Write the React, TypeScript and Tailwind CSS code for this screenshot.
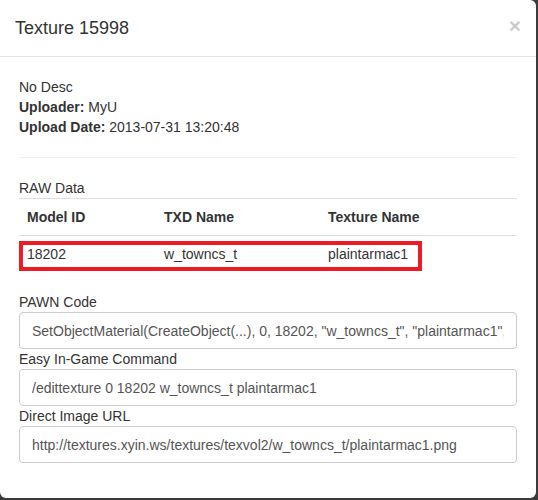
import React from "react";

const rows = [{ model: "18202", txd: "w_towncs_t", tex: "plaintarmac1" }];

const fields = [
  { label: "PAWN Code", value: 'SetObjectMaterial(CreateObject(...), 0, 18202, "w_towncs_t", "plaintarmac1", 0xFFFFFFFF);' },
  { label: "Easy In-Game Command", value: "/edittexture 0 18202 w_towncs_t plaintarmac1" },
  { label: "Direct Image URL", value: "http://textures.xyin.ws/textures/texvol2/w_towncs_t/plaintarmac1.png" },
];

export default function App() {
  return (
    <div className="h-[500px] w-[538px] overflow-hidden bg-[#3b3b3b] font-['Liberation_Sans',Arial,sans-serif] text-[14px] leading-[20px] text-[#333]">
      <div className="h-[498px] w-[536px] rounded-tr-md rounded-b-md bg-white">
        <div className="flex items-start justify-between border-b border-[#e5e5e5] px-[15px] pb-[15px] pt-[15px]">
          <h4 className="text-[18px] leading-[26px]">Texture 15998</h4>
          <button className="mt-[-2px] text-[21px] font-bold leading-[26px] text-black opacity-20">×</button>
        </div>

        <div className="pl-[19px] pr-[19px] pt-5">
          <div>
            <p>No Desc</p>
            <p><b>Uploader:</b> MyU</p>
            <p><b>Upload Date:</b> 2013-07-31 13:20:48</p>
          </div>
          <hr className="my-5 border-t border-[#eee]" />

          <p>RAW Data</p>
          <div className="relative mb-5">
            <table className="w-full border-collapse text-left">
              <thead>
                <tr className="border-y border-[#ddd]">
                  <th className="w-[137px] p-2 font-bold">Model ID</th>
                  <th className="w-[164px] p-2 font-bold">TXD Name</th>
                  <th className="p-2 font-bold">Texture Name</th>
                </tr>
              </thead>
              <tbody>
                {rows.map((r) => (
                  <tr key={r.model}>
                    <td className="p-2">{r.model}</td>
                    <td className="p-2">{r.txd}</td>
                    <td className="p-2">{r.tex}</td>
                  </tr>
                ))}
              </tbody>
            </table>
            {/* highlight drawn over the row */}
            <div className="pointer-events-none absolute left-0 top-[43px] h-[30px] w-[403px] border-4 border-[#ed1c24]" />
          </div>

          {fields.map((f) => (
            <div key={f.label}>
              <label className="block">{f.label}</label>
              <input
                readOnly
                value={f.value}
                className="block h-[37px] w-full rounded border border-[#ccc] px-3 text-[14px] text-[#555] outline-none"
              />
            </div>
          ))}
        </div>
      </div>
    </div>
  );
}
